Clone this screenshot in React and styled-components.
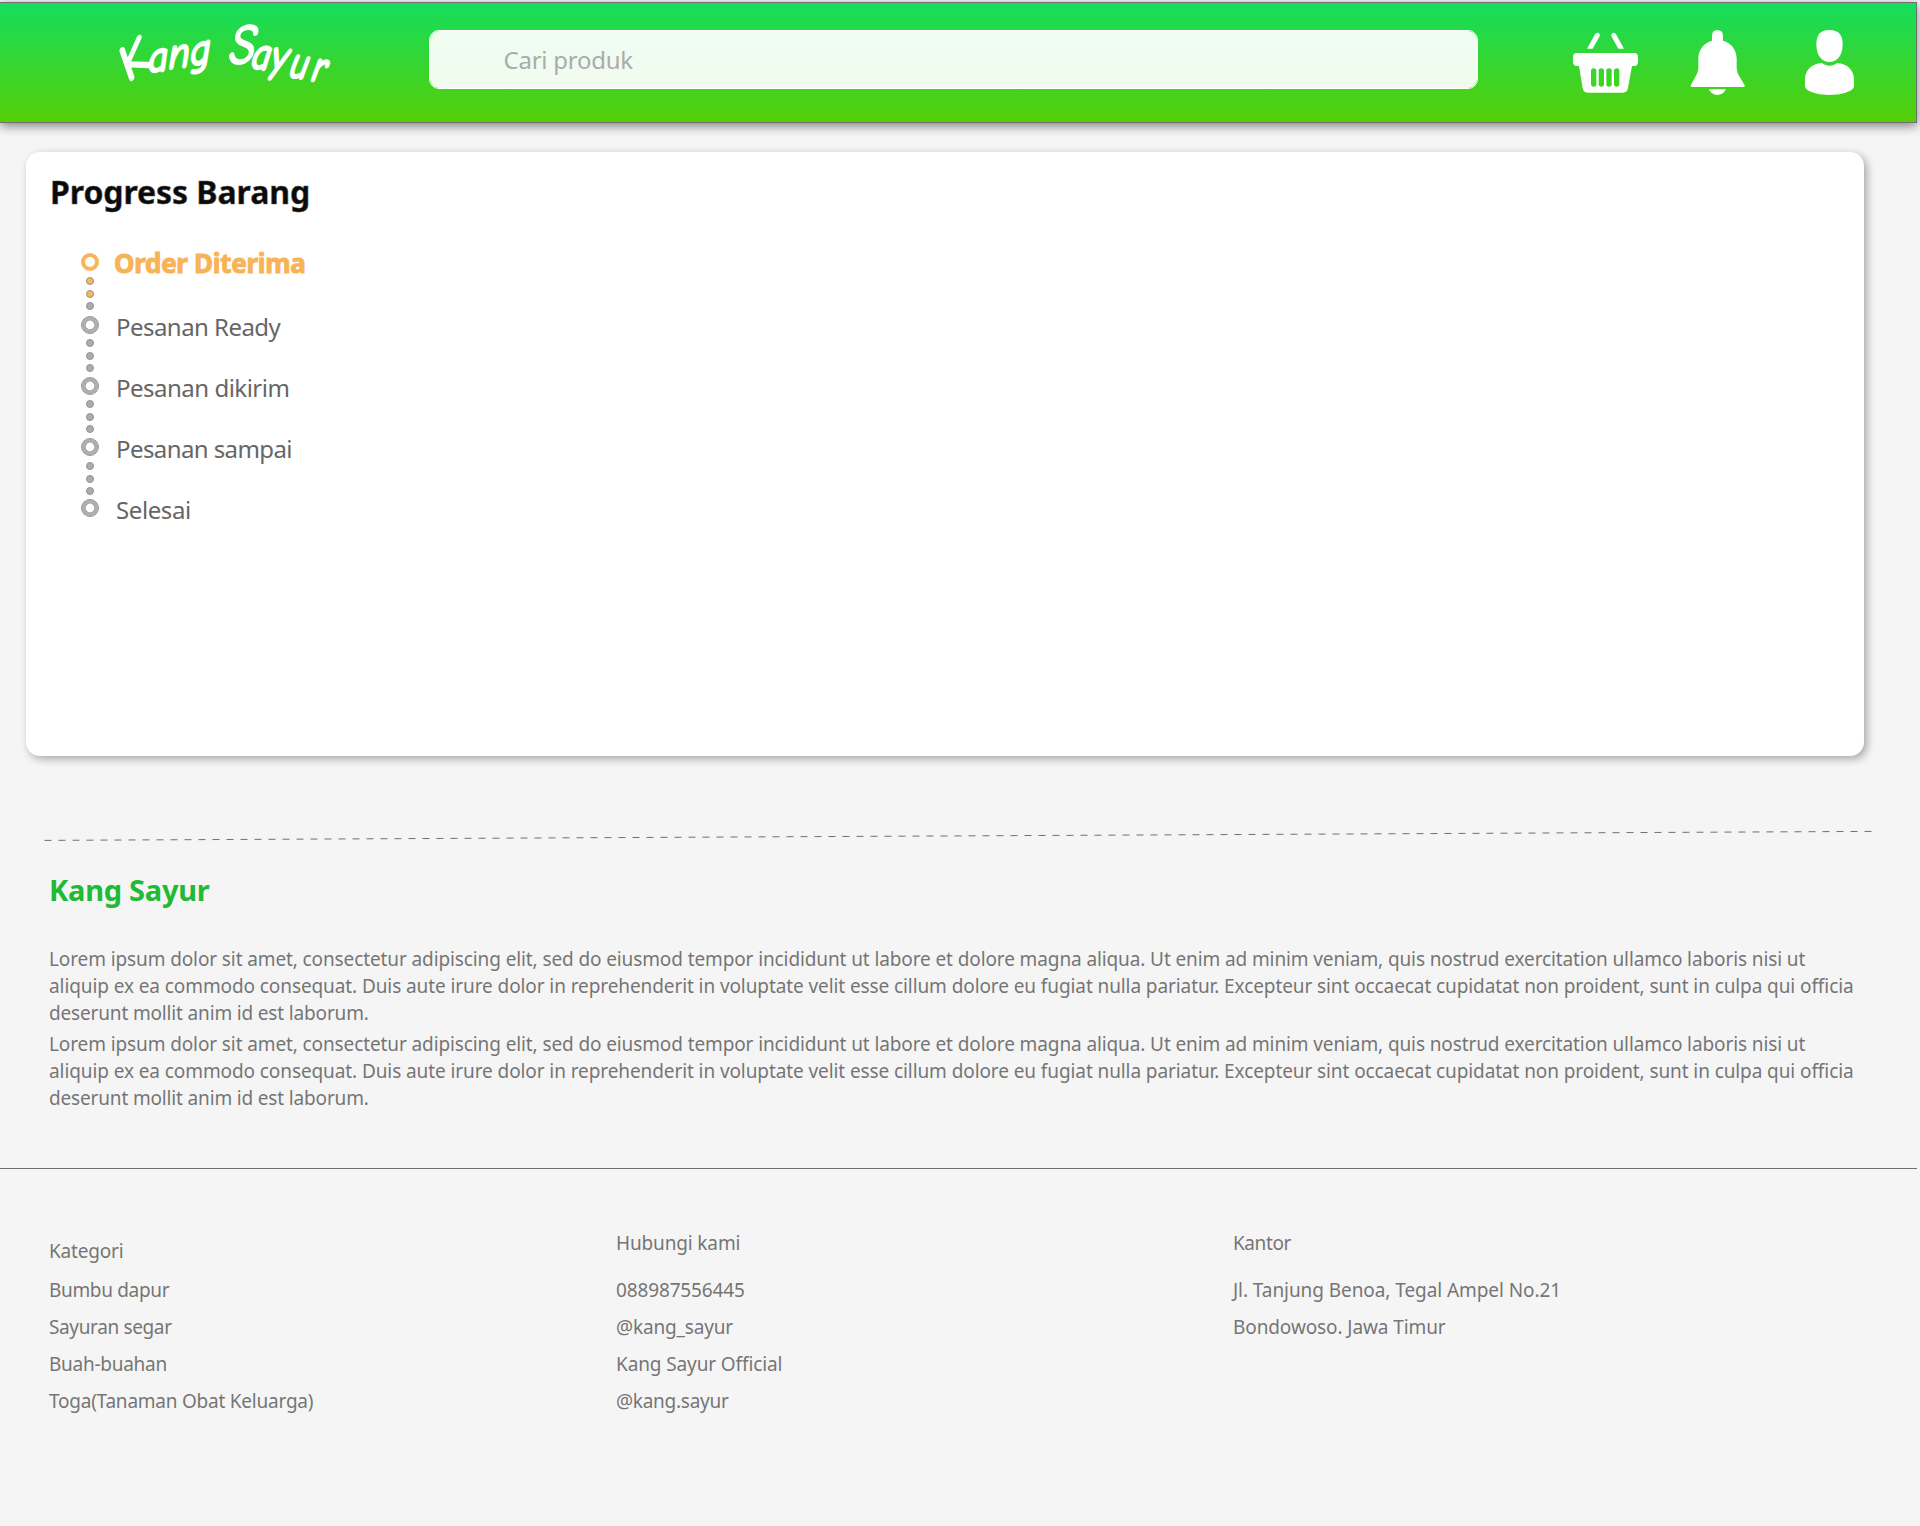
import React from "react";
import styled, { createGlobalStyle } from "styled-components";

const GlobalStyle = createGlobalStyle`
  *, *::before, *::after { box-sizing: border-box; }
  body {
    margin: 0;
    background: #f5f5f5;
    font-family: "Noto Sans", "Open Sans", sans-serif;
    color: #757575;
  }
  h1, h2, p, ul, ol { margin: 0; padding: 0; }
  ul, ol { list-style: none; }
`;

const Page = styled.div`
  display: flex;
  flex-direction: column;
  width: 1920px;
  min-height: 1526px;
  padding-top: 2px;
  overflow: hidden;
`;

const Header = styled.header`
  display: flex;
  align-items: flex-start;
  flex-shrink: 0;
  width: 1917px;
  height: 121px;
  padding-left: 110px;
  background: linear-gradient(#15dd5d, #55cf06);
  border: 1px solid #707070;
  border-left: 0;
  box-shadow: 0 3px 10px rgba(0, 0, 0, 0.48);
`;

const Logo = styled.svg`
  width: 225px;
  height: 80px;
  margin-top: 12px;
  flex-shrink: 0;
  overflow: visible;
`;

const LogoText = styled.text`
  font-family: "Comic Neue", cursive;
  fill: #fff;
  stroke: #fff;
  stroke-width: 2.6px;
  stroke-linejoin: round;
  stroke-linecap: round;
`;

const Search = styled.input`
  width: 1049px;
  height: 59px;
  margin: 27px 95px 0 94px;
  padding: 0 0 0 73.5px;
  border: 1px solid #fff;
  border-radius: 10px;
  background: rgba(255, 255, 255, 0.93);
  background-clip: padding-box;
  font-family: inherit;
  font-size: 24px;
  letter-spacing: -0.25px;
  outline: none;

  &::placeholder { color: #ababab; opacity: 1; }
`;

const Actions = styled.nav`
  display: flex;
  margin-top: 27px;
`;

const ActionIcon = styled.svg`
  display: block;
  width: ${(p) => p.$width}px;
  height: 65px;
  margin-left: ${(p) => p.$gap || 0}px;
  fill: #fff;
`;

const Card = styled.main`
  flex-shrink: 0;
  width: 1837.5px;
  height: 604px;
  margin: 29px 0 0 26px;
  padding: 18px 24px;
  border-radius: 14px;
  background: #fff;
  box-shadow: 3px 3px 8px rgba(0, 0, 0, 0.32);
`;

const CardTitle = styled.h1`
  font-size: 32px;
  line-height: 44px;
  letter-spacing: -0.08px;
  color: #0a0a0a;
  -webkit-text-stroke: 0.5px #555;
  white-space: nowrap;
`;

const Steps = styled.ol`
  margin: 39px 0 0 31px;
`;

const Step = styled.li`
  display: flex;
  align-items: flex-start;
  gap: ${(p) => (p.$active ? 15 : 17)}px;
  height: ${(p) => p.$height}px;
`;

const Marker = styled.div`
  display: flex;
  flex-direction: column;
  align-items: center;
  width: 18px;
`;

const Ring = styled.span`
  width: 18px;
  height: 18px;
  margin-bottom: ${(p) => p.$space}px;
  border: ${(p) => (p.$active ? "4px solid #f9b55c" : "1px solid #989898")};
  border-radius: 50%;
  background: #fff;
  box-shadow: ${(p) =>
    p.$active ? "none" : "inset 0 0 0 3px #b0b0b0, inset 0 0 0 3.6px #989898"};
`;

const Dot = styled.span`
  width: 8px;
  height: 8px;
  margin-bottom: ${(p) => p.$space}px;
  border: 1px solid #929292;
  border-radius: 50%;
  background: ${(p) => (p.$active ? "#f9b55c" : "#adadad")};
`;

const StepLabel = styled.span`
  font-size: ${(p) => (p.$active ? 26 : 24)}px;
  font-weight: ${(p) => (p.$active ? 700 : 400)};
  line-height: ${(p) => (p.$active ? 21 : 22)}px;
  letter-spacing: ${(p) => p.$spacing}px;
  color: ${(p) => (p.$active ? "#f9b357" : "#666")};
  -webkit-text-stroke: ${(p) => (p.$active ? "1px #f9b357" : "0")};
  white-space: nowrap;
`;

const Divider = styled.svg`
  display: block;
  flex-shrink: 0;
  width: 1920px;
  height: 12px;
  margin-top: 74px;
`;

const About = styled.section`
  padding: 28px 49px 0;
`;

const AboutTitle = styled.h2`
  margin-bottom: 36px;
  font-size: 29px;
  line-height: 40px;
  letter-spacing: -0.25px;
  color: #22b935;
`;

const Paragraph = styled.p`
  font-size: 19px;
  line-height: 27px;

  & + & { margin-top: 4px; }
`;

const Line = styled.span`
  display: block;
  letter-spacing: ${(p) => p.$spacing}px;
  white-space: nowrap;
`;

const Footer = styled.footer`
  display: grid;
  grid-template-columns: 567px 617px 1fr;
  align-items: start;
  width: 1917px;
  margin-top: 56px;
  padding: 61px 0 0 49px;
  border-top: 1px solid #707070;
  font-size: 19px;
`;

const ColumnTitle = styled.h2`
  height: 42px;
  padding-top: ${(p) => (p.$lowered ? 8 : 0)}px;
  font-size: 19px;
  font-weight: 400;
  line-height: 27px;
  letter-spacing: ${(p) => p.$spacing}px;
`;

const ColumnItem = styled.li`
  line-height: 37px;
  letter-spacing: ${(p) => p.$spacing}px;
  white-space: nowrap;
`;

const SLANT = 14;
const CONDENSE = 0.82;

const logoLetters = [
  { ch: "K", x: 17, y: 68, size: 56, turn: -36 },
  { ch: "a", x: 37, y: 58, size: 45, turn: -8 },
  { ch: "n", x: 57, y: 54, size: 45, turn: -6 },
  { ch: "g", x: 79, y: 51, size: 45, turn: -8 },
  { ch: " ", x: 103, y: 50, size: 45, turn: 0 },
  { ch: "S", x: 117, y: 49, size: 56, turn: -2 },
  { ch: "a", x: 139, y: 53, size: 45, turn: 4 },
  { ch: "y", x: 158, y: 55, size: 45, turn: 6 },
  { ch: "u", x: 177, y: 61, size: 43, turn: 8 },
  { ch: "r", x: 199, y: 65, size: 43, turn: 8 },
];

const shear = Math.tan((SLANT * Math.PI) / 180);

const steps = [
  { label: "Order Diterima", active: true, height: 63, gaps: [6, 5, 4], lit: 2, spacing: -0.32 },
  { label: "Pesanan Ready", height: 61, gaps: [5, 5, 4], spacing: -0.54 },
  { label: "Pesanan dikirim", height: 61, gaps: [5, 5, 4], spacing: -0.5 },
  { label: "Pesanan sampai", height: 61, gaps: [6, 5, 4], spacing: -0.59 },
  { label: "Selesai", height: 22, gaps: null, spacing: -0.4 },
];

const loremLines = [
  {
    text: "Lorem ipsum dolor sit amet, consectetur adipiscing elit, sed do eiusmod tempor incididunt ut labore et dolore magna aliqua. Ut enim ad minim veniam, quis nostrud exercitation ullamco laboris nisi ut",
    spacing: -0.11,
  },
  {
    text: "aliquip ex ea commodo consequat. Duis aute irure dolor in reprehenderit in voluptate velit esse cillum dolore eu fugiat nulla pariatur. Excepteur sint occaecat cupidatat non proident, sunt in culpa qui officia",
    spacing: -0.092,
  },
  { text: "deserunt mollit anim id est laborum.", spacing: -0.16 },
];

const columns = [
  {
    title: "Kategori",
    spacing: -0.18,
    lowered: true,
    items: [
      ["Bumbu dapur", -0.33],
      ["Sayuran segar", -0.36],
      ["Buah-buahan", -0.26],
      ["Toga(Tanaman Obat Keluarga)", -0.23],
    ],
  },
  {
    title: "Hubungi kami",
    spacing: -0.144,
    items: [
      ["088987556445", -0.14],
      ["@kang_sayur", -0.16],
      ["Kang Sayur Official", -0.116],
      ["@kang.sayur", -0.26],
    ],
  },
  {
    title: "Kantor",
    spacing: -0.4,
    items: [
      ["Jl. Tanjung Benoa, Tegal Ampel No.21", -0.07],
      ["Bondowoso. Jawa Timur", -0.1],
    ],
  },
];

function KangSayurLogo() {
  return (
    <Logo viewBox="0 0 225 80">
      <LogoText transform={`skewX(${-SLANT}) scale(${CONDENSE} 1)`} xmlSpace="preserve">
        {logoLetters.map((l, i) => (
          <tspan
            key={i}
            x={(l.x + shear * l.y) / CONDENSE}
            y={l.y}
            rotate={l.turn}
            fontSize={l.size}
          >
            {l.ch}
          </tspan>
        ))}
      </LogoText>
    </Logo>
  );
}

function BasketIcon() {
  return (
    <ActionIcon viewBox="399 90 195 195" $width={65}>
      <path d="M441 146 L465 103 Q469 96 476 99 Q482 103 478 110 L458 146 Z" />
      <path d="M552 146 L528 103 Q524 96 517 99 Q512 103 515 110 L535 146 Z" />
      <path
        fillRule="evenodd"
        d="M411 159 H582 Q594 159 594 171 V185 Q594 198 582 198 H576 L564 264 Q562 278 548 278 H443 Q430 278 428 264 L417 198 H411 Q399 198 399 185 V171 Q399 159 411 159 Z
        M453 213 V252 Q453 260 461 260 Q469 260 469 252 V213 Q469 205 461 205 Q453 205 453 213 Z
        M476 213 V252 Q476 260 484 260 Q492 260 492 252 V213 Q492 205 484 205 Q476 205 476 213 Z
        M499 213 V252 Q499 260 507 260 Q515 260 515 252 V213 Q515 205 507 205 Q499 205 499 213 Z
        M522 213 V252 Q522 260 530 260 Q538 260 538 252 V213 Q538 205 530 205 Q522 205 522 213 Z"
      />
    </ActionIcon>
  );
}

function BellIcon() {
  return (
    <ActionIcon viewBox="750 90 165 195" $width={55} $gap={52}>
      <path d="M832 90 Q849 91 849 107 V122 C874 129 889 148 890 174 V202 C890 214 894 222 898 229 L913 254 Q917 261 909 261 H757 Q749 261 753 254 L767 229 C771 222 775 214 775 202 V174 C776 148 791 129 816 122 V107 Q816 91 832 90 Z" />
      <path d="M807 268 H858 C852 280 843 285 832 285 C822 285 812 280 807 268 Z" />
    </ActionIcon>
  );
}

function UserIcon() {
  return (
    <ActionIcon viewBox="1095 90 150 195" $width={50} $gap={60}>
      <path d="M1168 90 C1196 90 1208 104 1208 134 C1208 164 1192 186 1168 186 C1145 186 1129 164 1129 134 C1129 104 1141 90 1168 90 Z" />
      <path d="M1146 189 C1160 200 1177 200 1191 189 C1225 192 1242 211 1242 240 V258 Q1242 264 1237 268 C1222 280 1197 285 1168 285 C1140 285 1115 280 1100 268 Q1095 264 1095 258 V240 C1095 211 1112 192 1146 189 Z" />
    </ActionIcon>
  );
}

export default function App() {
  return (
    <Page>
      <GlobalStyle />
      <Header>
        <KangSayurLogo />
        <Search type="text" placeholder="Cari produk" />
        <Actions>
          <BasketIcon />
          <BellIcon />
          <UserIcon />
        </Actions>
      </Header>

      <Card>
        <CardTitle>Progress Barang</CardTitle>
        <Steps>
          {steps.map((s) => (
            <Step key={s.label} $active={s.active} $height={s.height}>
              <Marker>
                <Ring $active={s.active} $space={s.gaps ? s.gaps[0] : 0} />
                {s.gaps &&
                  [0, 1, 2].map((i) => (
                    <Dot key={i} $active={i < (s.lit || 0)} $space={s.gaps[i + 1] || 0} />
                  ))}
              </Marker>
              <StepLabel $active={s.active} $spacing={s.spacing}>
                {s.label}
              </StepLabel>
            </Step>
          ))}
        </Steps>
      </Card>

      <Divider viewBox="0 0 1920 12">
        <line x1="44.5" y1="10.4" x2="1871.5" y2="1.4" stroke="#707070" strokeWidth="1" strokeDasharray="7 7" />
      </Divider>

      <About>
        <AboutTitle>Kang Sayur</AboutTitle>
        {[0, 1].map((n) => (
          <Paragraph key={n}>
            {loremLines.map((l) => (
              <Line key={l.text} $spacing={l.spacing}>
                {l.text}
              </Line>
            ))}
          </Paragraph>
        ))}
      </About>

      <Footer>
        {columns.map((c) => (
          <section key={c.title}>
            <ColumnTitle $lowered={c.lowered} $spacing={c.spacing}>
              {c.title}
            </ColumnTitle>
            <ul>
              {c.items.map(([text, spacing]) => (
                <ColumnItem key={text} $spacing={spacing}>
                  {text}
                </ColumnItem>
              ))}
            </ul>
          </section>
        ))}
      </Footer>
    </Page>
  );
}
